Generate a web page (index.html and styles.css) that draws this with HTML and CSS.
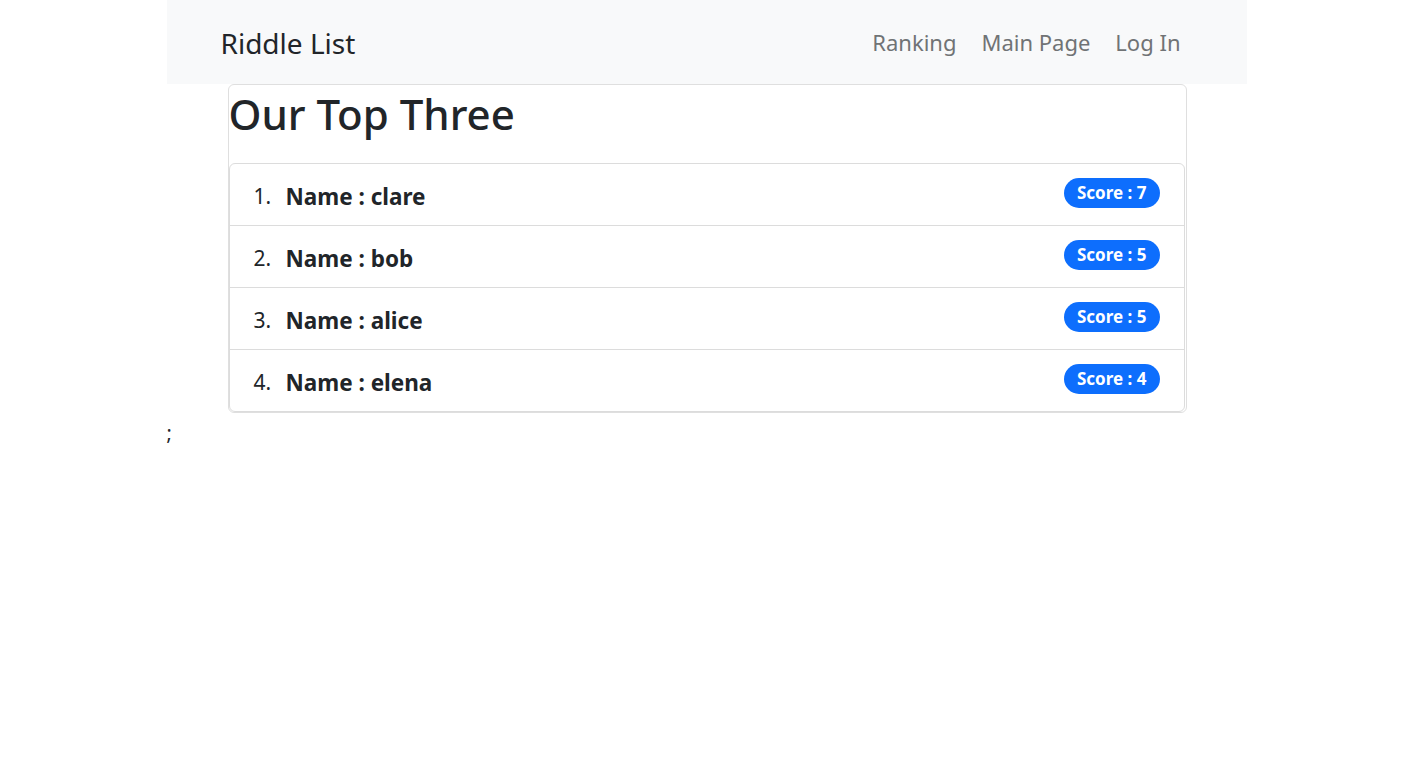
FILE: index.html
```html
<!DOCTYPE html>
<html lang="en">
<head>
<meta charset="utf-8">
<title>Riddle List</title>
<link rel="stylesheet" href="styles.css">
</head>
<body>
<div class="page">
  <nav class="navbar">
    <a class="brand" href="#">Riddle List</a>
    <ul class="nav-links">
      <li><a href="#">Ranking</a></li>
      <li><a href="#">Main Page</a></li>
      <li><a href="#">Log In</a></li>
    </ul>
  </nav>
  <div class="card">
    <h1 class="title">Our Top Three</h1>
    <ol class="rank-list">
      <li class="rank-item"><span class="num">1.</span><span class="name">Name : clare</span><span class="badge">Score : 7</span></li>
      <li class="rank-item"><span class="num">2.</span><span class="name">Name : bob</span><span class="badge">Score : 5</span></li>
      <li class="rank-item"><span class="num">3.</span><span class="name">Name : alice</span><span class="badge">Score : 5</span></li>
      <li class="rank-item"><span class="num">4.</span><span class="name">Name : elena</span><span class="badge">Score : 4</span></li>
    </ol>
  </div>
  <p class="semi">;</p>
</div>
</body>
</html>
```
FILE: styles.css
```css
html, body {
  margin: 0;
  padding: 0;
  background: #fff;
}
body {
  font-family: "Noto Sans", "Open Sans", sans-serif;
  color: #212529;
}
.page {
  width: 1080px;
  margin: 0 auto;
}
.navbar {
  height: 84px;
  background: #f8f9fa;
  display: flex;
  align-items: center;
  justify-content: space-between;
  padding: 0 66px 0 54px;
  box-sizing: border-box;
}
.brand {
  font-size: 28px;
  color: #212529;
  text-decoration: none;
  padding-top: 1px;
}
.nav-links {
  list-style: none;
  display: flex;
  margin: 0;
  padding: 0;
  gap: 25px;
}
.nav-links a {
  font-size: 22px;
  color: #707375;
  text-decoration: none;
}
.card {
  margin: 0 60px 0 61px;
  border: 1px solid #dfdfdf;
  border-radius: 6px;
}
.title {
  font-size: 42px;
  font-weight: 500;
  margin: 0;
  height: 78px;
  line-height: 58px;
}
.rank-list {
  list-style: none;
  margin: 0 1px 0 0;
  padding: 0;
  border: 1px solid #dcdcdc;
  border-radius: 6px;
}
.rank-item {
  display: flex;
  align-items: center;
  height: 61px;
  box-sizing: border-box;
  padding: 3px 24px 0 24px;
  border-top: 1px solid #dcdcdc;
}
.rank-item + .rank-item {
  height: 62px;
}
.num {
  font-size: 21px;
  width: 32px;
}
.name {
  font-size: 22.5px;
  font-weight: 700;
  flex: 1;
}
.rank-item:first-child {
  border-top: none;
}
.badge {
  background: #0d6efd;
  color: #fff;
  font-weight: 700;
  font-size: 17px;
  line-height: 1;
  padding: 6.5px 13px;
  border-radius: 16px;
  margin-top: -7px;
}
.semi {
  font-size: 20px;
  margin: 6px 0 0;
}
```
